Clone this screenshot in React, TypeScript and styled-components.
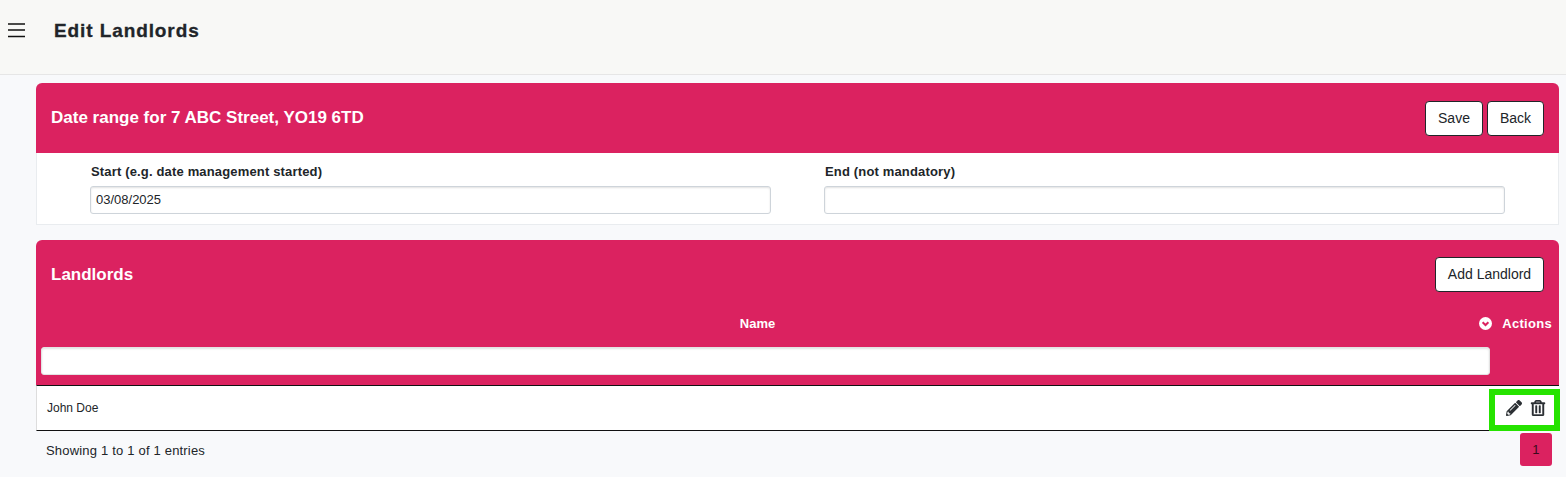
import React from "react";
import styled, { createGlobalStyle } from "styled-components";
import { FaPencilAlt, FaRegTrashAlt } from "react-icons/fa";

const Global = createGlobalStyle`
  html, body { margin: 0; padding: 0; background: #f8f9fb; font-family: "Liberation Sans", Arial, sans-serif; color: #212529; }
  * { box-sizing: border-box; }
`;
const Page = styled.div`
  position: relative;
  width: 1566px;
  height: 477px;
  overflow: hidden;
`;
const TopBar = styled.header`
  height: 75px;
  background: #f8f8f6;
  border-bottom: 1px solid #e6e6e6;
  display: flex;
  align-items: flex-start;
  padding: 20px 0 0 8px;
`;
const MenuButton = styled.div`
  width: 18px;
  height: 20px;
  color: #111;
  margin-right: 28px;
  svg { display: block; }
`;
const PageTitle = styled.h1`
  margin: 0;
  font-size: 19px;
  line-height: 21px;
  font-weight: 700;
  letter-spacing: 0.9px;
  color: #212529;
  -webkit-text-stroke: 0.3px #212529;
`;
const Main = styled.main`
  padding: 8px 7px 0 36px;
  display: flex;
  flex-direction: column;
  gap: 15px;
`;
const Card = styled.section`
  background: #fff;
  border: 1px solid #e9ecef;
  border-top: 0;
  border-radius: 6px 6px 0 0;
`;
const FormHead = styled.div`
  background: #db2260;
  margin: 0 -1px;
  border-radius: 6px 6px 0 0;
`;
const TableHead = styled.div`
  background: #db2260;
  border-radius: 6px 6px 0 0;
`;
const HeadRow = styled.div<{ $h: number }>`
  height: ${(p) => p.$h}px;
  display: flex;
  align-items: center;
  justify-content: space-between;
  padding: 0 15px;
`;
const CardTitle = styled.h2<{ $nudge?: number }>`
  margin: ${(p) => p.$nudge ?? 0}px 0 0;
  color: #fff;
  font-size: 17px;
  line-height: 20px;
  font-weight: 700;
`;
const Buttons = styled.div`
  display: flex;
  gap: 4px;
`;
const Button = styled.button<{ $w: number }>`
  width: ${(p) => p.$w}px;
  height: 35px;
  background: #fff;
  border: 1px solid #212529;
  border-radius: 4px;
  color: #212529;
  font: 14px "Liberation Sans", Arial, sans-serif;
  padding: 0;
`;
const FormGrid = styled.div`
  display: grid;
  grid-template-columns: 681px 681px;
  column-gap: 53px;
  padding: 11px 0 10px 53px;
  height: 71px;
`;
const Field = styled.label`
  display: block;
`;
const FieldLabel = styled.div`
  font-size: 13px;
  line-height: 16px;
  font-weight: 700;
  letter-spacing: 0.16px;
  color: #212529;
  padding-left: 1px;
  margin-bottom: 6px;
`;
const TextInput = styled.div`
  height: 28px;
  background: #fff;
  border: 1px solid #ced4da;
  border-radius: 3px;
  box-shadow: inset 0 1px 2px rgba(0, 0, 0, 0.12);
  font-size: 13px;
  line-height: 26px;
  padding-left: 5px;
  color: #212529;
`;
const TableCard = styled.section`
  position: relative;
`;
const ColumnRow = styled.div`
  display: grid;
  grid-template-columns: 1443px 1fr;
  height: 39px;
  padding-bottom: 8px;
  color: #fff;
  font-size: 13px;
  font-weight: 700;
  align-items: center;
`;
const NameHeader = styled.div`
  text-align: center;
`;
const ActionsHeader = styled.div`
  display: flex;
  align-items: center;
  justify-content: flex-end;
  gap: 10px;
  padding-right: 7px;
  letter-spacing: 0.3px;
  white-space: nowrap;
`;
const FilterRow = styled.div`
  padding: 0 69px 10px 5px;
`;
const FilterInput = styled.div`
  height: 28px;
  background: #fff;
  border: 1px solid #e3e3e3;
  border-radius: 3px;
  box-shadow: inset 0 1px 2px rgba(0, 0, 0, 0.12);
`;
const DataRow = styled.div`
  display: flex;
  align-items: center;
  justify-content: space-between;
  height: 46px;
  background: #fff;
  border-top: 1px solid #111;
  border-bottom: 1px solid #111;
  border-left: 1px solid #ddd;
  font-size: 12px;
  color: #212529;
  padding: 0 13px 0 10px;
`;
const ActionIcons = styled.div`
  display: flex;
  align-items: center;
  gap: 8px;
  color: #2b2f33;
  svg { display: block; }
`;
const HeavyTrash = styled(FaRegTrashAlt)`
  stroke: currentColor;
  stroke-width: 14px;
`;
const Highlight = styled.div`
  position: absolute;
  left: 1453px;
  top: 149px;
  width: 71px;
  height: 42px;
  border: 6px solid #26e300;
  pointer-events: none;
`;
const Footer = styled.div`
  display: flex;
  justify-content: space-between;
  align-items: flex-start;
  padding: 2px 7px 0 10px;
  font-size: 13px;
  letter-spacing: 0.19px;
  color: #212529;
`;
const Info = styled.div`
  padding-top: 10px;
`;
const PageChip = styled.div`
  width: 32px;
  height: 33px;
  background: #db2260;
  border-radius: 3px;
  display: flex;
  align-items: center;
  justify-content: center;
  font-size: 13px;
  color: #3a0a1c;
`;

export default function App() {
  return (
    <Page>
      <Global />
      <TopBar>
        <MenuButton>
          <svg width="18" height="20" viewBox="0 0 18 20" fill="none" stroke="currentColor" strokeWidth="1.5">
            <path d="M0 4h17M0 10h17M0 16.5h17" />
          </svg>
        </MenuButton>
        <PageTitle>Edit Landlords</PageTitle>
      </TopBar>
      <Main>
        <Card>
          <FormHead>
            <HeadRow $h={70}>
              <CardTitle>Date range for 7 ABC Street, YO19 6TD</CardTitle>
              <Buttons>
                <Button $w={58}>Save</Button>
                <Button $w={57}>Back</Button>
              </Buttons>
            </HeadRow>
          </FormHead>
          <FormGrid>
            <Field>
              <FieldLabel>Start (e.g. date management started)</FieldLabel>
              <TextInput>03/08/2025</TextInput>
            </Field>
            <Field>
              <FieldLabel>End (not mandatory)</FieldLabel>
              <TextInput />
            </Field>
          </FormGrid>
        </Card>
        <TableCard>
          <TableHead>
            <HeadRow $h={68}>
              <CardTitle $nudge={2}>Landlords</CardTitle>
              <Button $w={109}>Add Landlord</Button>
            </HeadRow>
            <ColumnRow>
              <NameHeader>Name</NameHeader>
              <ActionsHeader>
                <svg width="13" height="13" viewBox="0 0 13 13">
                  <circle cx="6.5" cy="6.5" r="6.5" fill="#fff" />
                  <path d="M3.6 5.2 6.5 8l2.9-2.8" fill="none" stroke="#db2260" strokeWidth="2" />
                </svg>
                Actions
              </ActionsHeader>
            </ColumnRow>
            <FilterRow>
              <FilterInput />
            </FilterRow>
          </TableHead>
          <DataRow>
            John Doe
            <ActionIcons>
              <FaPencilAlt size={16} />
              <HeavyTrash size={16} />
            </ActionIcons>
          </DataRow>
          <Highlight />
          <Footer>
            <Info>Showing 1 to 1 of 1 entries</Info>
            <PageChip>1</PageChip>
          </Footer>
        </TableCard>
      </Main>
    </Page>
  );
}
